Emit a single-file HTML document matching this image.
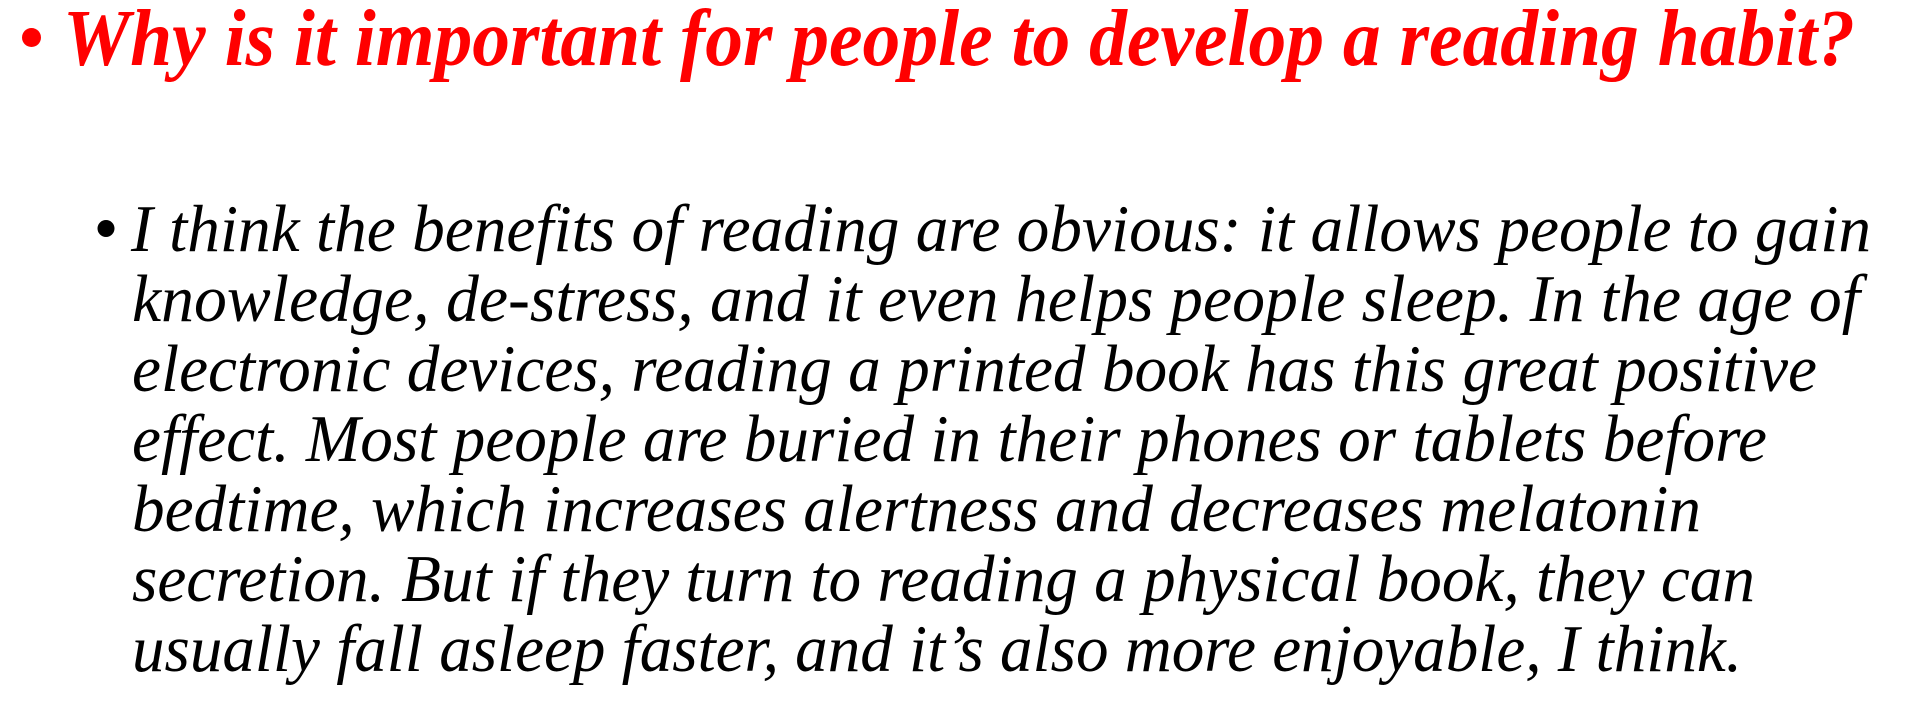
<!DOCTYPE html>
<html><head><meta charset="utf-8"><style>
html,body{margin:0;padding:0;background:#fff;width:1928px;height:707px;overflow:hidden}
svg{display:block}
.t{font-family:"Liberation Serif",serif;font-style:italic;font-weight:bold;font-size:80px;fill:#ff0000}
.b{font-family:"Liberation Serif",serif;font-style:italic;font-size:67px;fill:#000}
</style></head><body>
<svg width="1928" height="707" viewBox="0 0 1928 707" xmlns="http://www.w3.org/2000/svg">
<circle cx="31.5" cy="37.5" r="9.5" fill="#ff0000"/>
<text class="t" x="63" y="65" textLength="1792" lengthAdjust="spacingAndGlyphs">Why is it important for people to develop a reading habit?</text>
<circle cx="106" cy="228.5" r="8.5" fill="#000"/>
<text class="b" x="131" y="251" textLength="1740" lengthAdjust="spacingAndGlyphs">I think the benefits of reading are obvious: it allows people to gain</text>
<text class="b" x="132" y="321" textLength="1728" lengthAdjust="spacingAndGlyphs">knowledge, de-stress, and it even helps people sleep. In the age of</text>
<text class="b" x="132" y="391" textLength="1685" lengthAdjust="spacingAndGlyphs">electronic devices, reading a printed book has this great positive</text>
<text class="b" x="132" y="461" textLength="1635" lengthAdjust="spacingAndGlyphs">effect. Most people are buried in their phones or tablets before</text>
<text class="b" x="132" y="531" textLength="1569" lengthAdjust="spacingAndGlyphs">bedtime, which increases alertness and decreases melatonin</text>
<text class="b" x="132" y="601" textLength="1623" lengthAdjust="spacingAndGlyphs">secretion. But if they turn to reading a physical book, they can</text>
<text class="b" x="132" y="671" textLength="1610" lengthAdjust="spacingAndGlyphs">usually fall asleep faster, and it’s also more enjoyable, I think.</text>
</svg>
</body></html>
